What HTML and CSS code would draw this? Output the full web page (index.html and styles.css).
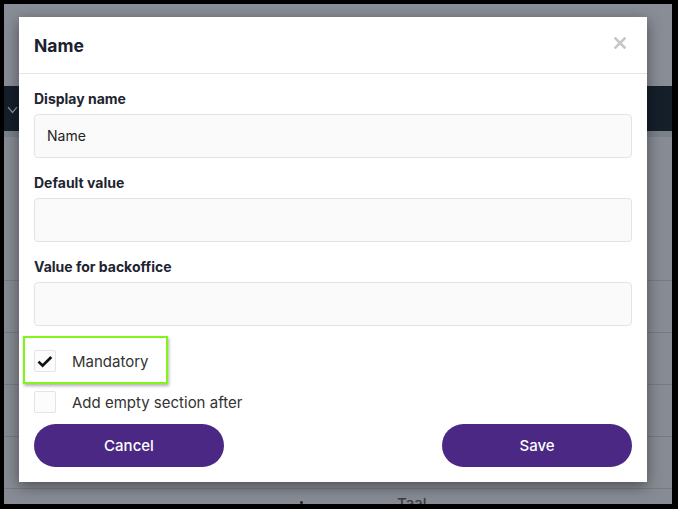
FILE: index.html
```html
<!DOCTYPE html>
<html>
<head>
<meta charset="utf-8">
<link rel="stylesheet" href="styles.css">
</head>
<body>
<div class="screen">
  <div class="page">
    <div class="topbar"></div>
    <div class="darkbar">
      <svg class="chev" width="11" height="8" viewBox="0 0 11 8"><path d="M1 1.2 L5.5 6.5 L10 1.2" fill="none" stroke="#8b929c" stroke-width="1.3"/></svg>
    </div>
    <div class="strip"></div>
    <div class="row row-first"></div>
    <div class="row"></div>
    <div class="row"></div>
    <div class="row"></div>
    <div class="row"></div>
    <div class="row row-last"><span class="dot"></span><span class="taal">Taal</span></div>
  </div>

  <div class="modal">
    <div class="modal-header">
      <h2 class="modal-title">Name</h2>
      <svg class="close" width="12" height="12" viewBox="0 0 12 12"><path d="M1.5 1.5 L10.5 10.5 M10.5 1.5 L1.5 10.5" stroke="#c6c6c6" stroke-width="2.5" stroke-linecap="square"/></svg>
    </div>
    <div class="modal-body">
      <div class="field">
        <div class="label">Display name</div>
        <div class="input">Name</div>
      </div>
      <div class="field">
        <div class="label">Default value</div>
        <div class="input"></div>
      </div>
      <div class="field">
        <div class="label">Value for backoffice</div>
        <div class="input"></div>
      </div>
      <div class="check-row check-first">
        <span class="highlight"></span>
        <span class="box">
          <svg width="16" height="13" viewBox="0 0 16 13"><path d="M1.5 6.6 L5.6 10.7 L14.3 2" fill="none" stroke="#111" stroke-width="2.7"/></svg>
        </span>
        <span class="check-text">Mandatory</span>
      </div>
      <div class="check-row">
        <span class="box"></span>
        <span class="check-text">Add empty section after</span>
      </div>
      <div class="buttons">
        <button class="btn">Cancel</button>
        <button class="btn">Save</button>
      </div>
    </div>
  </div>
</div>
</body>
</html>
```

FILE: styles.css
```css
html, body {
  margin: 0;
  padding: 0;
  background: #000;
}
body {
  width: 678px;
  height: 509px;
  overflow: hidden;
  font-family: Inter, "Noto Sans", sans-serif;
}
.screen {
  position: relative;
  margin: 4px 6px 0 4px;
  width: 668px;
  height: 500px;
  overflow: hidden;
  background: #888c94;
}
.page {
  display: flex;
  flex-direction: column;
}
.topbar {
  height: 82px;
  background: #898d95;
}
.darkbar {
  height: 45px;
  background: #151f2a;
  display: flex;
  align-items: center;
  padding-left: 3px;
}
.chev {
  margin-top: 2px;
}
.strip {
  height: 6px;
  background: #7c8189;
}
.row {
  height: 51px;
  border-bottom: 1px solid #777c84;
  background: #878b93;
}
.row-first {
  height: 143px;
}
.row-last {
  border-bottom: none;
  position: relative;
}
.taal {
  position: absolute;
  left: 393px;
  top: 5px;
  font-size: 15px;
  color: #3b3e44;
  font-weight: 500;
}
.dot {
  position: absolute;
  left: 296px;
  top: 12px;
  width: 3px;
  height: 3px;
  border-radius: 50%;
  background: #222;
}
.modal {
  position: absolute;
  left: 15px;
  top: 13px;
  width: 628px;
  height: 465px;
  background: #fff;
  box-shadow: 0 4px 14px rgba(0, 0, 0, 0.45);
  display: flex;
  flex-direction: column;
}
.modal-header {
  height: 56px;
  border-bottom: 1px solid #e4e4e8;
  display: flex;
  align-items: center;
  justify-content: space-between;
  padding: 0 21px 0 15px;
}
.modal-title {
  margin: 0;
  font-size: 17.5px;
  font-weight: 700;
  color: #1b2130;
  margin-top: 1px;
}
.close {
  margin-top: -4px;
}
.modal-body {
  padding: 15px 15px 15px 15px;
  display: flex;
  flex-direction: column;
}
.field {
  margin-bottom: 15px;
}
.label {
  height: 20px;
  line-height: 20px;
  font-size: 14px;
  font-weight: 700;
  color: #1e2431;
  margin-bottom: 5px;
}
.input {
  box-sizing: border-box;
  height: 44px;
  border: 1px solid #e2e2e8;
  border-radius: 4px;
  background: #fafafa;
  padding-left: 12px;
  line-height: 42px;
  font-size: 14px;
  color: #222;
}
.check-row {
  position: relative;
  display: flex;
  align-items: center;
  height: 22px;
  gap: 16px;
}
.check-first {
  margin-top: 9px;
  margin-bottom: 19px;
}
.box {
  box-sizing: border-box;
  width: 22px;
  height: 22px;
  border: 1px solid #e3e3ea;
  border-radius: 2px;
  background: #fcfcfc;
  display: flex;
  align-items: center;
  justify-content: center;
}
.check-text {
  font-size: 15px;
  color: #333;
}
.highlight {
  position: absolute;
  left: -11px;
  top: -14px;
  width: 141px;
  height: 44px;
  border: 2px solid #82f518;
  box-shadow: 1px 2px 3px rgba(0, 0, 0, 0.3);
}
.buttons {
  margin-top: 11px;
  display: flex;
  justify-content: space-between;
}
.btn {
  width: 190px;
  height: 43px;
  border: none;
  border-radius: 22px;
  background: #4a2884;
  color: #fff;
  font-family: Inter, "Noto Sans", sans-serif;
  font-size: 15px;
  font-weight: 500;
  padding: 0;
}
```
